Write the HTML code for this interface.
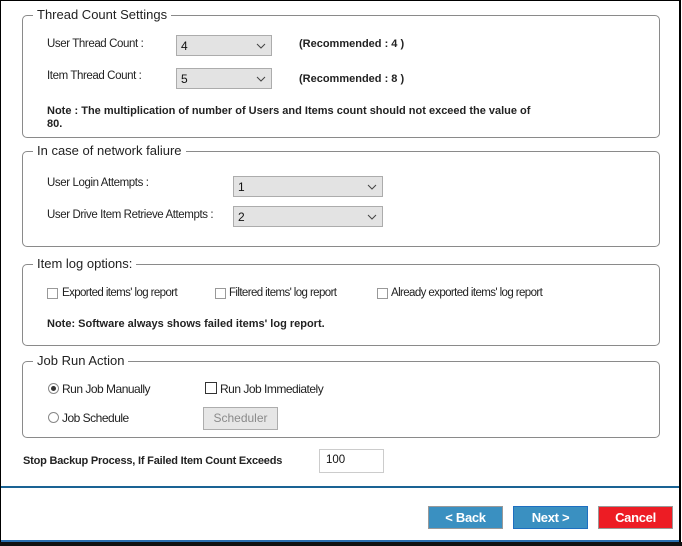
<!DOCTYPE html>
<html><head><meta charset="utf-8"><style>
*{box-sizing:border-box;margin:0;padding:0}
body{width:682px;height:546px;background:#fff;position:relative;overflow:hidden;font-family:"Liberation Sans",Arial,sans-serif;color:#111}
.a{position:absolute}
.frame{position:absolute;left:0;top:0;width:681px;height:546px;border-left:1px solid #000;border-top:1px solid #000;border-right:2px solid #000}
.gb{position:absolute;left:22px;width:638px;border:1px solid #8a8a8a;border-radius:5px}
.gt{position:absolute;left:10px;top:-9px;background:#fff;padding:0 4px;font-size:13px;color:#222;line-height:16px}
.lb{position:absolute;font-size:11.5px;letter-spacing:-0.4px;color:#222;white-space:nowrap}
.bd{position:absolute;font-size:11px;font-weight:bold;color:#222;white-space:nowrap}
.sel{position:absolute;height:21px;background:#e3e3e3;border:1px solid #acacac;font-size:12px;padding:3px 4px}
.sel svg{position:absolute;right:5px;top:7px}
.cb{position:absolute;width:11px;height:11px;border:1px solid #999;background:#fff}
.btn{position:absolute;top:506px;width:75px;height:23px;color:#fff;font-size:13px;font-weight:bold;text-align:center;line-height:21px;letter-spacing:-0.3px}
</style></head><body>
<div class="frame"></div>

<div class="gb" style="top:15px;height:123px"><div class="gt">Thread Count Settings</div></div>
<div class="lb" style="left:47px;top:38px">User Thread Count :</div>
<div class="sel" style="left:176px;top:35px;width:96px">4<svg width="10" height="6"><path d="M1 1L5 5L9 1" stroke="#444" fill="none"/></svg></div>
<div class="bd" style="left:299px;top:38px">(Recommended : 4 )</div>
<div class="lb" style="left:47px;top:70px">Item Thread Count :</div>
<div class="sel" style="left:176px;top:68px;width:96px">5<svg width="10" height="6"><path d="M1 1L5 5L9 1" stroke="#444" fill="none"/></svg></div>
<div class="bd" style="left:299px;top:73px">(Recommended : 8 )</div>
<div class="bd" style="left:47px;top:105px;line-height:13px">Note : The multiplication of number of Users and Items count should not exceed the value of<br>80.</div>

<div class="gb" style="top:151px;height:96px"><div class="gt">In case of network faliure</div></div>
<div class="lb" style="left:47px;top:177px">User Login Attempts :</div>
<div class="sel" style="left:233px;top:176px;width:150px">1<svg width="10" height="6"><path d="M1 1L5 5L9 1" stroke="#444" fill="none"/></svg></div>
<div class="lb" style="left:47px;top:209px">User Drive Item Retrieve Attempts :</div>
<div class="sel" style="left:233px;top:206px;width:150px">2<svg width="10" height="6"><path d="M1 1L5 5L9 1" stroke="#444" fill="none"/></svg></div>

<div class="gb" style="top:264px;height:82px"><div class="gt">Item log options:</div></div>
<div class="cb" style="left:47px;top:288px"></div><div class="lb" style="left:62px;top:287px;letter-spacing:-0.6px">Exported items' log report</div>
<div class="cb" style="left:215px;top:288px"></div><div class="lb" style="left:229px;top:287px;letter-spacing:-0.6px">Filtered items' log report</div>
<div class="cb" style="left:377px;top:288px"></div><div class="lb" style="left:391px;top:287px;letter-spacing:-0.6px">Already exported items' log report</div>
<div class="bd" style="left:47px;top:318px">Note: Software always shows failed items' log report.</div>

<div class="gb" style="top:361px;height:77px"><div class="gt">Job Run Action</div></div>
<div class="a" style="left:48px;top:383px;width:11px;height:11px;border:1px solid #888;border-radius:50%"><div class="a" style="left:2px;top:2px;width:5px;height:5px;border-radius:50%;background:#333"></div></div>
<div class="lb" style="left:62px;top:382px;font-size:12px;letter-spacing:-0.5px">Run Job Manually</div>
<div class="a" style="left:205px;top:382px;width:12px;height:12px;border:1px solid #333"></div>
<div class="lb" style="left:220px;top:382px;font-size:12px;letter-spacing:-0.5px">Run Job Immediately</div>
<div class="a" style="left:48px;top:412px;width:11px;height:11px;border:1px solid #888;border-radius:50%"></div>
<div class="lb" style="left:62px;top:411px;font-size:12px;letter-spacing:-0.5px">Job Schedule</div>
<div class="a" style="left:203px;top:407px;width:75px;height:23px;background:#e6e6e6;border:1px solid #adadad;color:#8a8a8a;font-size:12px;text-align:center;line-height:21px">Scheduler</div>

<div class="bd" style="left:23px;top:455px;letter-spacing:-0.2px">Stop Backup Process, If Failed Item Count Exceeds</div>
<div class="a" style="left:319px;top:449px;width:65px;height:24px;border:1px solid #ccc;font-size:11.5px;padding:4px 6px">100</div>

<div class="a" style="left:1px;top:486px;width:678px;height:2px;background:#1a6394"></div>
<div class="btn" style="left:428px;background:#3a90c1;border:1px solid #999">&lt; Back</div>
<div class="btn" style="left:513px;background:#3a90c1;border:1px solid #1f6fc0">Next &gt;</div>
<div class="btn" style="left:598px;background:#ed1c24;border:1px solid #999">Cancel</div>
<div class="a" style="left:1px;top:540px;width:678px;height:2px;background:#2a6fb0"></div>
<div class="a" style="left:0;top:542px;width:682px;height:4px;background:#111"></div>
</body></html>
